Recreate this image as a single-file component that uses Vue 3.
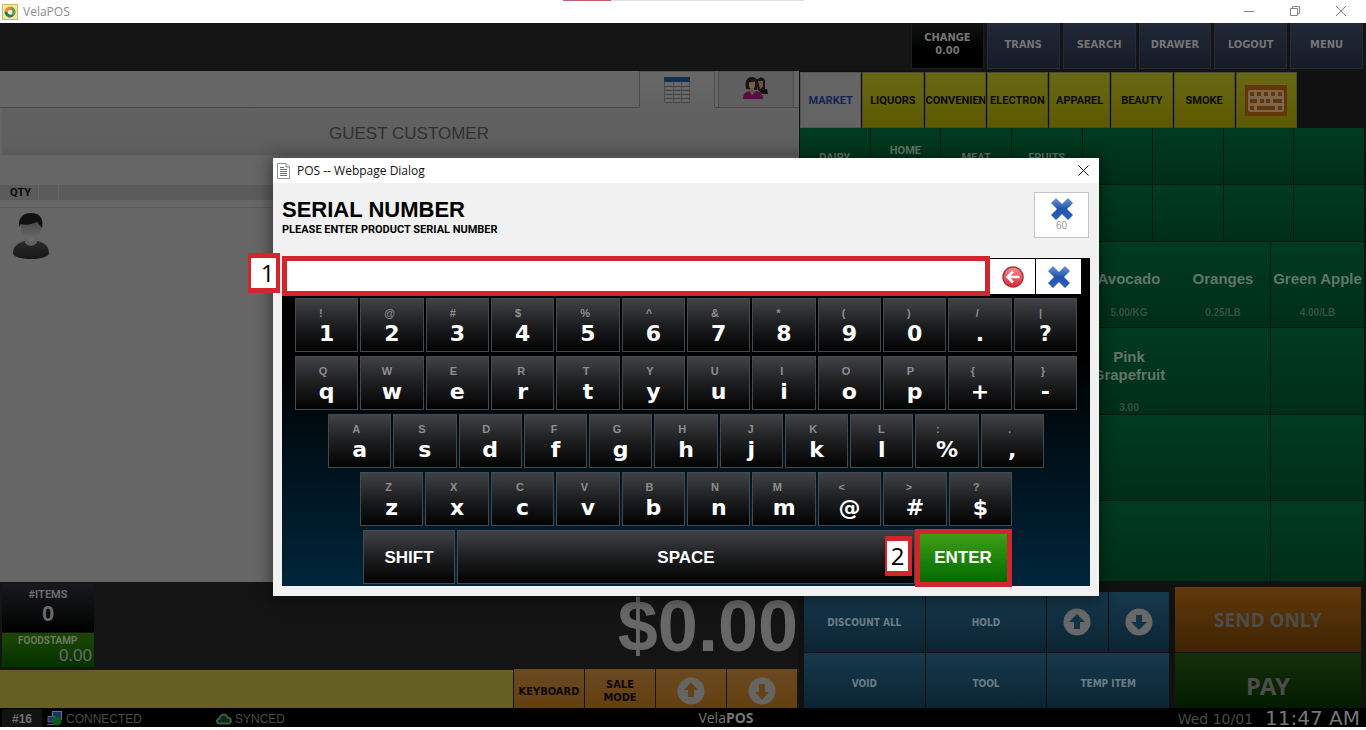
<script setup>
import { ref } from 'vue'

const serial = ref('')

const navItems = ['TRANS', 'SEARCH', 'DRAWER', 'LOGOUT', 'MENU']
const categories = ['MARKET', 'LIQUORS', 'CONVENIEN', 'ELECTRON', 'APPAREL', 'BEAUTY', 'SMOKE']
const departments = [
  ['DAIRY'], ['HOME', '\u00a0'], ['MEAT'], ['FRUITS'], [], [], [], [],
  [], [], [], [], [], [], [], [],
]

const products = Array.from({ length: 24 }, () => ({ name: '', price: '' }))
products[3] = { name: 'Avocado', price: '5.00/KG' }
products[4] = { name: 'Oranges', price: '0.25/LB' }
products[5] = { name: 'Green Apple', price: '4.00/LB' }
products[9] = { name: 'Pink Grapefruit', price: '3.00' }

const rows = [
  { id: 'digits', keys: ['!1', '@2', '#3', '$4', '%5', '^6', '&7', '*8', '(9', ')0', '/.', '|?'] },
  { id: 'upper', keys: ['Qq', 'Ww', 'Ee', 'Rr', 'Tt', 'Yy', 'Uu', 'Ii', 'Oo', 'Pp', '{+', '}-'] },
  { id: 'home', keys: ['Aa', 'Ss', 'Dd', 'Ff', 'Gg', 'Hh', 'Jj', 'Kk', 'Ll', ':%', '.,'] },
  { id: 'lower', keys: ['Zz', 'Xx', 'Cc', 'Vv', 'Bb', 'Nn', 'Mm', '<@', '>#', '?$'] },
]

function press(key) {
  serial.value += key
}
</script>

<template>
  <div class="window">
    <header class="titlebar">
      <svg class="app-icon" viewBox="0 0 16 16" aria-hidden="true">
        <rect x="0.5" y="0.5" width="15" height="15" fill="#f5e79a" stroke="#c9b96a" />
        <path d="M3 8A5 5 0 0 1 11 3.6L9 6A3 3 0 0 0 5.6 8.5Z" fill="#e8853a" />
        <path d="M2.600 9A5.400 5.400 0 0 1 4 4L6.500 6.500A3 3 0 0 0 5.500 9Z" fill="#d9a23c" />
        <path d="M10 2.8A5.4 5.4 0 0 1 11.6 12L9.6 10A3 3 0 0 0 9 5.6Z" fill="#5f9e48" />
        <path d="M12 11.6A5.4 5.4 0 0 1 2.6 7.6L5.4 8A3 3 0 0 0 9.6 10.4Z" fill="#1f7c6c" />
        <circle cx="8" cy="8" r="2" fill="#fdfbe8" />
      </svg>
      <span class="app-name">VelaPOS</span>
      <span class="top-mark"></span>
      <div class="win-controls">
        <button type="button" aria-label="Minimize"><svg viewBox="0 0 12 12"><path d="M1 6.5H11" /></svg></button>
        <button type="button" aria-label="Restore"><svg viewBox="0 0 12 12"><path d="M1.5 3.5H8.5V10.5H1.5ZM3.5 3.5V1.5H10.5V8.5H8.5" /></svg></button>
        <button type="button" aria-label="Close window"><svg viewBox="0 0 12 12"><path d="M1 1L11 11M11 1L1 11" /></svg></button>
      </div>
    </header>

    <nav class="topnav">
      <div class="nav-grid">
        <div class="change"><span>CHANGE</span><span>0.00</span></div>
        <button v-for="item in navItems" :key="item" type="button">{{ item }}</button>
      </div>
    </nav>

    <main class="workspace">
      <section class="sale">
        <div class="sale-tabs">
          <button type="button" class="sale-tab active" aria-label="Items">
            <svg width="26" height="26" viewBox="0 0 26 26">
              <rect width="26" height="26" fill="#686868" />
              <rect width="26" height="5" fill="#11304f" />
              <path d="M0 9.5H26M0 13.5H26M0 17.5H26M0 21.5H26M0 25.5H26" stroke="#3e4246" />
              <path d="M0.5 5V26M9.5 5V26M17.5 5V26M25.5 5V26" stroke="#4c4c4c" />
            </svg>
          </button>
          <button type="button" class="sale-tab" aria-label="Customers">
            <svg width="26" height="22" viewBox="0 0 26 22">
              <path d="M14 4C14 0 21 -1 22 4V12H24L25 17H19L15 13Z" fill="#17110f" />
              <path d="M15 4H20V10L17 12Z" fill="#6b5344" />
              <path d="M3 12C1 2 6 0 9 0C15 0 16 6 14 13Z" fill="#1c1410" />
              <path d="M6 5Q9 6 12 4V10Q9 14 6 10Z" fill="#74604e" />
              <path d="M7 11H11V16H7Z" fill="#69523f" />
              <path d="M0 22Q0 15 6 14L9 18L13 14Q20 15 20 22Z" fill="#5a0b43" />
            </svg>
          </button>
        </div>
        <div class="guest">GUEST CUSTOMER</div>
        <div class="list-head"><span>QTY</span><i></i></div>
        <div class="list">
          <svg width="38" height="48" viewBox="0 0 38 48" aria-hidden="true">
            <defs>
              <linearGradient id="coat" x1="0" y1="0" x2="0" y2="1"><stop stop-color="#2b2b2b" /><stop offset="1" stop-color="#161616" /></linearGradient>
              <linearGradient id="skin" x1="0" y1="0" x2="0" y2="1"><stop stop-color="#474747" /><stop offset="1" stop-color="#6e6e6e" /></linearGradient>
            </defs>
            <path d="M1 41C1 33 8 30 13 29Q19 34 25 29C31 30 37 33 37 41C37 49 1 49 1 41Z" fill="url(#coat)" />
            <path d="M13 24H25V31Q19 37 13 31Z" fill="#606060" />
            <path d="M9 12Q19 6 29 13C30 22 24 29 19 29C14 29 8 22 9 12Z" fill="url(#skin)" />
            <path d="M7 15C6 5 12 1 19 1C28 1 32 7 30 16Q27 12 25 10Q17 14 9 12Z" fill="#101010" />
          </svg>
        </div>
      </section>

      <section class="catalog">
        <div class="categories">
          <button v-for="(c, i) in categories" :key="c" type="button" :class="{ active: i === 0 }">{{ c }}</button>
          <button type="button" aria-label="Keyboard">
            <svg width="42" height="31" viewBox="0 0 42 31">
              <rect width="42" height="31" fill="#643508" />
              <rect x="3" y="5" width="36" height="22" rx="2" fill="#7b6650" />
              <g fill="#643508">
                <rect x="5" y="7" width="4" height="4" /><rect x="12" y="7" width="4" height="4" /><rect x="19" y="7" width="4" height="4" /><rect x="26" y="7" width="4" height="4" /><rect x="33" y="7" width="4" height="4" />
                <rect x="5" y="14" width="7" height="4" /><rect x="15" y="14" width="4" height="4" /><rect x="21" y="14" width="4" height="4" /><rect x="28" y="14" width="9" height="4" />
                <rect x="5" y="21" width="4" height="4" /><rect x="12" y="21" width="18" height="4" /><rect x="33" y="21" width="4" height="4" />
              </g>
            </svg>
          </button>
        </div>
        <div class="departments">
          <button v-for="(d, i) in departments" :key="i" type="button" :aria-label="d.length ? undefined : 'Empty department'">
            <span v-for="line in d" :key="line">{{ line }}</span>
          </button>
        </div>
        <div class="products">
          <button v-for="(p, i) in products" :key="i" type="button" :aria-label="p.name ? undefined : 'Empty product'">
            <strong>{{ p.name }}</strong>
            <small>{{ p.price }}</small>
          </button>
        </div>
      </section>
    </main>

    <section class="bottom">
      <div class="totals">
        <div class="summary">
          <div class="counts">
            <div class="items"><span>#ITEMS</span><b>0</b></div>
            <div class="foodstamp"><span>FOODSTAMP</span><em>0.00</em></div>
          </div>
          <div class="total">$0.00</div>
        </div>
        <div class="command">
          <div class="scan"></div>
          <button type="button">KEYBOARD</button>
          <button type="button">SALE<br />MODE</button>
          <button type="button" aria-label="Scroll up">
            <svg width="28" height="28" viewBox="0 0 28 28"><circle cx="14" cy="14" r="13.500" fill="#676563" /><path d="M14 5L21 13H17V20H11V13H7Z" fill="#63431b" /></svg>
          </button>
          <button type="button" aria-label="Scroll down">
            <svg width="28" height="28" viewBox="0 0 28 28"><circle cx="14" cy="14" r="13.500" fill="#676563" /><path d="M14 23L7 15H11V7H17V15H21Z" fill="#63431b" /></svg>
          </button>
        </div>
      </div>
      <div class="actions">
        <div class="blue">
          <button type="button">DISCOUNT ALL</button>
          <button type="button">HOLD</button>
          <button type="button" aria-label="Page up">
            <svg width="28" height="28" viewBox="0 0 28 28"><circle cx="14" cy="14" r="13.500" fill="#686868" /><path d="M14 6L22 14H17V21H11V14H6Z" fill="#123247" /></svg>
          </button>
          <button type="button" aria-label="Page down">
            <svg width="28" height="28" viewBox="0 0 28 28"><circle cx="14" cy="14" r="13.500" fill="#686868" /><path d="M14 22L6 14H11V7H17V14H22Z" fill="#123247" /></svg>
          </button>
          <button type="button" class="lower">VOID</button>
          <button type="button" class="lower">TOOL</button>
          <button type="button" class="lower wide">TEMP ITEM</button>
        </div>
        <div class="pay-col">
          <button type="button" class="send">SEND ONLY</button>
          <button type="button" class="pay">PAY</button>
        </div>
      </div>
    </section>

    <footer class="status">
      <div class="status-left">
        <b class="station">#16</b>
        <span class="connected">
          <svg width="16" height="15" viewBox="0 0 16 15" aria-hidden="true">
            <rect x="5.500" y="0.500" width="9" height="8" fill="#143566" stroke="#6a7280" />
            <path d="M1 5.500H8V11H1ZM0 13.500H8" fill="#173a6b" stroke="#5d6570" />
            <circle cx="10" cy="10" r="4.500" fill="#0b5a16" />
          </svg>
          CONNECTED
        </span>
        <span class="synced">
          <svg width="16" height="12" viewBox="0 0 16 12" aria-hidden="true">
            <path d="M4 10.500C0 10.500 0 6 3.500 5.500C4 1 10 0 11.500 4.500C16 5 16 10.500 12 10.500Z" fill="#0b2a14" stroke="#3b5a44" stroke-width="2" />
          </svg>
          SYNCED
        </span>
      </div>
      <span class="brand">Vela<b>POS</b></span>
      <div class="clock"><span>Wed 10/01</span><time>11:47 AM</time></div>
    </footer>

    <div class="dialog" role="dialog" aria-labelledby="dialog-title">
      <div class="dialog-bar">
        <svg width="13" height="16" viewBox="0 0 13 16" aria-hidden="true">
          <path d="M0.500 0.500H9L12.500 4V15.500H0.500Z" fill="#fdfdfd" stroke="#8b9299" />
          <path d="M9 0.500V4H12.500" fill="#dfe4e8" stroke="#8b9299" />
          <path d="M3 4.500H7M3 6.500H10M3 8.500H10M3 10.500H10M3 12.500H10" stroke="#4b7f95" />
        </svg>
        <span>POS -- Webpage Dialog</span>
        <button type="button" aria-label="Close dialog"><svg width="11" height="11" viewBox="0 0 11 11"><path d="M0.500 0.500L10.500 10.500M10.500 0.500L0.500 10.500" stroke="#111" fill="none" /></svg></button>
      </div>
      <div class="dialog-head">
        <div>
          <h1 id="dialog-title">SERIAL NUMBER</h1>
          <label for="serial">PLEASE ENTER PRODUCT SERIAL NUMBER</label>
        </div>
        <button type="button" class="cancel" aria-label="Cancel 60">
          <svg width="22" height="22" viewBox="0 0 22 22">
            <defs><linearGradient id="cross" x1="0" y1="0" x2="0" y2="1"><stop stop-color="#6d96d6" /><stop offset="0.500" stop-color="#2253ae" /><stop offset="1" stop-color="#2a62c4" /></linearGradient></defs>
            <path d="M5 0L11 6L17 0L22 5L16 11L22 17L17 22L11 16L5 22L0 17L6 11L0 5Z" fill="url(#cross)" />
          </svg>
          <span>60</span>
        </button>
      </div>

      <div class="keyboard">
        <div class="entry">
          <input id="serial" v-model="serial" type="text" autocomplete="off" />
          <button type="button" aria-label="Backspace" @click="serial = serial.slice(0, -1)">
            <svg width="22" height="22" viewBox="0 0 22 22">
              <defs><linearGradient id="back" x1="0" y1="0" x2="0" y2="1"><stop stop-color="#f58f8f" /><stop offset="1" stop-color="#e0263a" /></linearGradient></defs>
              <circle cx="11" cy="11" r="10" fill="url(#back)" stroke="#a93838" stroke-width="1.500" />
              <path d="M17.500 11H6M11 5.500L5.500 11L11 16.500" fill="none" stroke="#fff" stroke-width="2.500" />
            </svg>
          </button>
          <button type="button" aria-label="Clear" @click="serial = ''">
            <svg width="22" height="22" viewBox="0 0 22 22"><path d="M5 0L11 6L17 0L22 5L16 11L22 17L17 22L11 16L5 22L0 17L6 11L0 5Z" fill="url(#cross)" /></svg>
          </button>
        </div>
        <div v-for="row in rows" :key="row.id" class="key-row" :class="row.id">
          <button v-for="k in row.keys" :key="k" type="button" class="key" @click="press(k[1])">
            <span class="legend"><small>{{ k[0] }}</small><b>{{ k[1] }}</b></span>
          </button>
        </div>
        <div class="key-row modifiers">
          <button type="button" class="key word">SHIFT</button>
          <button type="button" class="key word space" @click="press(' ')">SPACE</button>
          <button type="button" class="key word enter">ENTER</button>
        </div>
      </div>

      <div class="mark mark-input"></div>
      <div class="mark mark-enter"></div>
      <div class="mark badge badge-one">1</div>
      <div class="mark badge badge-two">2</div>
    </div>
  </div>
</template>

<style>
body {
  margin: 0;
  background: #fff;
}
</style>

<style scoped>
* {
  box-sizing: border-box;
}

button {
  margin: 0;
  padding: 0;
  border: 0;
  background: none;
  font: inherit;
  color: inherit;
}

svg {
  display: block;
}

.window {
  position: relative;
  display: flex;
  flex-direction: column;
  min-height: 100vh;
  padding-bottom: 3px;
  overflow: hidden;
  background: #fff;
  font-family: "Liberation Sans", Arial, sans-serif;
}

/* Title bar */
.titlebar {
  position: relative;
  display: flex;
  align-items: center;
  gap: 5px;
  height: 23px;
  padding: 0 19px 0 2px;
}

.app-icon {
  width: 16px;
  height: 16px;
}

.app-name {
  font: 12px "Open Sans", "Noto Sans", sans-serif;
  color: #8c8c8c;
}

.top-mark {
  position: absolute;
  top: 0;
  left: 563px;
  width: 241px;
  height: 1px;
  background: linear-gradient(90deg, #c0606a 48px, #dedede 48px);
}

.win-controls {
  display: flex;
  gap: 34px;
  margin: 0 0 2px auto;
}

.win-controls svg {
  width: 12px;
  height: 12px;
  fill: none;
  stroke: #858585;
}

/* Top navigation */
.topnav {
  display: flex;
  justify-content: flex-end;
  height: 48px;
  padding: 0 3px 2px 0;
  background: #141414;
}

.nav-grid {
  display: grid;
  grid-template-columns: repeat(6, 1fr);
  gap: 3px;
  width: 33%;
  min-width: 452px;
  font: bold 11px/13px "DejaVu Sans Condensed", "DejaVu Sans", sans-serif;
  color: #757575;
}

.nav-grid button {
  border: 1px solid #212a3a;
  border-top: 0;
  background: linear-gradient(#222838, #171b26);
  padding-bottom: 3px;
}

.change {
  display: flex;
  flex-direction: column;
  align-items: center;
  padding-top: 8px;
  background: linear-gradient(#111315, #000 60%);
  border: 1px solid #191b1e;
  border-top: 0;
}

/* Workspace */
.workspace {
  flex: 1;
  display: grid;
  grid-template-columns: minmax(0, 799fr) minmax(0, 567fr);
  background: #111;
}

.sale {
  display: flex;
  flex-direction: column;
  background: #666;
}

.sale-tabs {
  display: flex;
  justify-content: flex-end;
  gap: 3px;
  height: 37px;
  padding-right: 5px;
  border-bottom: 1px solid #494949;
}

.sale-tab {
  display: flex;
  justify-content: center;
  width: 76px;
  height: 37px;
  padding-top: 5px;
  border: 1px solid #4b4b4b;
  border-top-color: #555;
  background: #5f5f5f;
}

.sale-tab.active {
  border-bottom-color: #626262;
  background: linear-gradient(#686868, #626262);
}

.guest {
  height: 47px;
  margin-left: 2px;
  margin-right: 1px;
  padding-left: 18px;
  background: linear-gradient(#626262, #5e5e5e 80%, #5a5a5a);
  font-size: 17px;
  line-height: 52px;
  text-align: center;
  color: #303030;
}

.list-head {
  display: flex;
  align-items: center;
  height: 15px;
  margin-top: 30px;
  padding-left: 10px;
  background: #5b5b5b;
  font: bold 11px Roboto, sans-serif;
  color: #080808;
}

.list-head i {
  width: 21px;
  height: 15px;
  margin-left: 7px;
  border: 1px solid #656565;
  border-width: 0 1px;
}

.list {
  flex: 1;
  margin-top: 7px;
  padding: 4px 12px;
  border-top: 1px solid #5a5a5a;
}

/* Catalog */
.catalog {
  display: flex;
  flex-direction: column;
  padding: 1px 2px 0 1px;
  background: #111;
}

.categories {
  display: grid;
  grid-template-columns: repeat(8, minmax(0, 1fr));
  gap: 1px;
  height: 56px;
  margin-right: 67px;
  font: bold 11px Roboto, sans-serif;
  color: #0b0b00;
}

.categories button {
  display: flex;
  align-items: center;
  justify-content: safe center;
  overflow: hidden;
  padding: 0;
  border: 1px solid #4b4b30;
  background: linear-gradient(#696815, #5c5900);
  white-space: nowrap;
}

.categories button.active {
  border-color: #555;
  background: #646464;
  color: #14225a;
}

.departments {
  display: grid;
  grid-template-columns: repeat(8, minmax(0, 1fr));
  grid-auto-rows: 56px;
  gap: 1px;
  padding-bottom: 1px;
  background: #061a0f;
  font: bold 11px/13px Roboto, sans-serif;
  color: #5f7668;
}

.departments button,
.products button {
  display: flex;
  flex-direction: column;
  align-items: center;
  background: linear-gradient(#003b20, #002e18);
}

.departments button {
  justify-content: center;
  padding-top: 2px;
}

.products {
  flex: 1;
  display: grid;
  grid-template-columns: repeat(6, minmax(0, 1fr));
  grid-template-rows: 86px 87px 86px minmax(80px, 1fr);
}

.products button {
  justify-content: space-between;
  padding: 28px 0 8px;
  border-bottom: 1px solid #061a0f;
  line-height: 18px;
  color: #60766a;
}

.products button:nth-child(6n) {
  border-left: 1px solid #061a0f;
}

.products button:nth-child(n + 7):nth-child(-n + 12) {
  padding: 20px 10px 0;
}

.products strong {
  font-size: 15px;
}

.products small {
  font-size: 10px;
  font-weight: bold;
  line-height: 12px;
  color: #34503f;
}

/* Bottom area */
.bottom {
  display: grid;
  grid-template-columns: minmax(0, 799fr) minmax(0, 567fr);
  height: 126px;
  background: #111;
}

.totals {
  display: flex;
  flex-direction: column;
  background: #141414;
}

.summary {
  display: flex;
  justify-content: space-between;
  height: 87px;
  padding: 2px 1px 0 2px;
}

.counts {
  width: 92px;
  color: #6b6b6b;
}

.items {
  display: flex;
  flex-direction: column;
  align-items: center;
  height: 48px;
  padding-top: 4px;
  background: linear-gradient(#17191c, #000);
}

.items span {
  font: bold 11px/13px Roboto, sans-serif;
}

.items b {
  font-size: 22px;
  line-height: 26px;
}

.foodstamp {
  display: flex;
  flex-direction: column;
  height: 34px;
  margin-top: 1px;
  padding: 1px 2px 0 16px;
  background: linear-gradient(#1d4600, #033200);
}

.foodstamp span {
  font: bold 10px/13px Roboto, sans-serif;
  color: #6a7a60;
}

.foodstamp em {
  font-size: 17px;
  font-style: normal;
  line-height: 17px;
  text-align: right;
}

.total {
  font-size: 72px;
  font-weight: bold;
  line-height: 85px;
  color: #676767;
}

.command {
  display: flex;
  gap: 1px;
  height: 39px;
  padding-right: 2px;
  font: bold 11px/13px "DejaVu Sans Condensed", "DejaVu Sans", sans-serif;
  color: #0d0600;
}

.scan {
  flex: 1;
  margin-top: 1px;
  background: #655f23;
}

.command button {
  display: flex;
  align-items: center;
  justify-content: center;
  width: 70px;
  padding-top: 5px;
  background: linear-gradient(#6b4a22, #633f10);
}

.actions {
  display: grid;
  grid-template-columns: minmax(0, 365fr) minmax(0, 186fr);
  gap: 6px;
  padding: 5px 5px 0;
}

.blue {
  display: grid;
  grid-template-columns: repeat(2, minmax(0, 2fr)) repeat(2, minmax(0, 1fr));
  grid-template-rows: 60px 55px;
  gap: 1px;
  margin-top: 5px;
  font: bold 10px "DejaVu Sans Condensed", "DejaVu Sans", sans-serif;
  color: #6c7d87;
}

.blue button {
  display: flex;
  align-items: center;
  justify-content: center;
  background: linear-gradient(#16394c, #0b2433);
}

.blue button.lower {
  padding-top: 6px;
}

.blue button.wide {
  grid-column: span 2;
}

.pay-col {
  display: grid;
  grid-template-rows: 65px 55px;
  gap: 1px;
  font-family: "Noto Sans", sans-serif;
  font-weight: bold;
  color: #4c4c4a;
  text-shadow: 1px 1px 0 #777;
}

.send {
  background: linear-gradient(#61390a, #3f2303);
  font-size: 19px;
}

.pay {
  padding-top: 10px;
  background: linear-gradient(#14300a, #021b00);
  font-size: 24px;
}

/* Status bar */
.status {
  display: grid;
  grid-template-columns: 1fr auto 1fr;
  align-items: center;
  height: 19px;
  padding: 0 6px 0 2px;
  background: #000;
  font-size: 12px;
  color: #4a4a4a;
}

.status-left,
.connected,
.synced,
.clock {
  display: flex;
  align-items: center;
}

.station {
  width: 40px;
  padding-top: 2px;
  background: #111214;
  line-height: 16px;
  text-align: center;
  color: #717171;
}

.connected {
  gap: 3px;
  margin-left: 5px;
  padding-top: 2px;
}

.synced {
  gap: 3px;
  margin-left: 74px;
  padding-top: 2px;
}

.brand {
  padding-left: 90px;
  font: 14px/19px "Open Sans", "Noto Sans", sans-serif;
  color: #777;
}

.clock {
  justify-content: flex-end;
  gap: 12px;
  font-family: "DejaVu Sans", sans-serif;
}

.clock span {
  padding-top: 4px;
  font-size: 14px;
  line-height: 15px;
}

.clock time {
  padding-top: 2px;
  font-size: 20px;
  line-height: 17px;
  color: #777;
}

/* Dialog */
.dialog {
  position: absolute;
  top: 158px;
  left: calc(50% - 410px);
  width: 826px;
  padding-bottom: 10px;
  background: #f1f1f1;
  box-shadow: 0 2px 14px 3px rgba(0, 0, 0, 0.4);
}

.dialog-bar {
  display: flex;
  align-items: center;
  gap: 7px;
  height: 25px;
  padding: 0 10px 0 4px;
  background: #fff;
  font: 12px "Open Sans", "Noto Sans", sans-serif;
  color: #111;
}

.dialog-bar button {
  margin-left: auto;
}

.dialog-head {
  display: flex;
  justify-content: space-between;
  height: 75px;
  padding: 9px 10px 0 9px;
}

.dialog-head h1 {
  margin: 5px 0 0;
  font-size: 22px;
  line-height: 25px;
  color: #000;
}

.dialog-head label {
  display: block;
  font: bold 11px/16px Roboto, sans-serif;
  color: #000;
}

.cancel {
  display: flex;
  flex-direction: column;
  align-items: center;
  width: 55px;
  height: 46px;
  padding-top: 5px;
  border: 1px solid #c3c3c6;
  background: #fff;
}

.cancel span {
  font-size: 10px;
  line-height: 12px;
  color: #999;
}

.keyboard {
  display: flex;
  flex-direction: column;
  align-items: center;
  gap: 4px;
  margin: 0 9px;
  padding-bottom: 2px;
  background: linear-gradient(#000 30%, #00263b);
}

.entry {
  display: flex;
  gap: 1px;
  width: 100%;
  height: 36px;
  padding: 1px 9px 0 0;
}

.entry input {
  flex: 1;
  min-width: 0;
  padding: 0 12px;
  border: 0;
  outline: 0;
  background: #fff;
  font: 20px "Liberation Sans", sans-serif;
}

.entry button {
  display: flex;
  align-items: center;
  justify-content: center;
  width: 45px;
  background: #fff;
}

.key-row {
  display: flex;
  gap: 2px;
  width: 782px;
  max-width: 100%;
}

.key-row.home {
  width: 716px;
}

.key-row.lower {
  width: 652px;
}

.key-row.modifiers {
  width: 646px;
}

.key {
  display: flex;
  flex: 1;
  justify-content: center;
  height: 54px;
  padding-top: 8px;
  border: 1px solid #45484c;
  background: linear-gradient(#404246, #1d1e20 50%, #020202);
}

.legend {
  display: flex;
  flex-direction: column;
  align-items: flex-start;
}

.legend small {
  font: bold 11px/13px "Liberation Sans", sans-serif;
  color: #8e8e8e;
}

.legend b {
  font: bold 22px/28px "DejaVu Sans", Verdana, sans-serif;
  color: #fff;
}

.key.word {
  flex: 0 0 92px;
  align-items: center;
  padding: 2px 0 0;
  font-size: 17px;
  font-weight: bold;
  color: #fff;
}

.key.space {
  flex: 1;
}

.key.enter {
  border-color: #2d8a12;
  background: linear-gradient(#43a017, #006a00);
}

/* Step callouts */
.mark {
  position: absolute;
  border: 5px solid #d1262e;
  pointer-events: none;
}

.mark-input {
  top: 98px;
  left: 9px;
  right: 109px;
  height: 40px;
}

.mark-enter {
  right: 87px;
  bottom: 9px;
  width: 97px;
  height: 58px;
}

.badge {
  height: 40px;
  background: #fff;
  font: 24px/30px "Open Sans", "Noto Sans", sans-serif;
  text-align: center;
  color: #000;
}

.badge-one {
  top: 95px;
  left: -25px;
  width: 32px;
  border-width: 5px 4px 5px 3px;
  padding-left: 8px;
}

.badge-two {
  right: 187px;
  bottom: 20px;
  width: 27px;
  border-width: 5px 4px 5px 2px;
}
</style>
